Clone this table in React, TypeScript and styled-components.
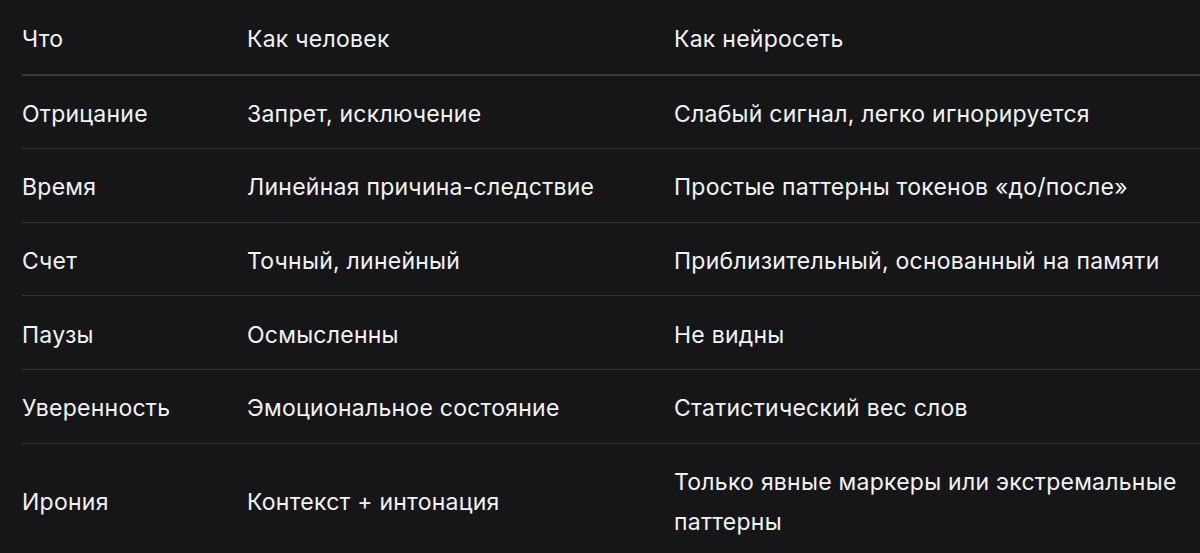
import React from "react";
import styled, { createGlobalStyle } from "styled-components";

const Global = createGlobalStyle`
  html, body { margin: 0; padding: 0; background: #161618; }
  body { font-family: Inter, "Noto Sans", sans-serif; color: #f2f2f4; }
`;

const Wrap = styled.div`
  padding: 0 0 0 22px;
  overflow: hidden;
  height: 553px;
`;

const Table = styled.table`
  border-collapse: collapse;
  width: calc(100% + 40px);
  table-layout: fixed;
  margin-top: 1px;
`;

const Cell = styled.td<{ $w?: number }>`
  box-sizing: border-box;
  width: ${(p) => (p.$w ? `${p.$w}px` : "auto")};
  padding: 18.3px 16px 14.3px 0;
  font-size: 23px;
  line-height: 40px;
  font-weight: 400;
  letter-spacing: 0.25px;
  vertical-align: middle;
  text-align: left;
`;

const Row = styled.tr<{ $head?: boolean }>`
  border-bottom: ${(p) => (p.$head ? "2px solid #3a3a3d" : "1.5px solid #333336")};
`;

const rows: [string, string, string][] = [
  ["Отрицание", "Запрет, исключение", "Слабый сигнал, легко игнорируется"],
  ["Время", "Линейная причина-следствие", "Простые паттерны токенов «до/после»"],
  ["Счет", "Точный, линейный", "Приблизительный, основанный на памяти"],
  ["Паузы", "Осмысленны", "Не видны"],
  ["Уверенность", "Эмоциональное состояние", "Статистический вес слов"],
  ["Ирония", "Контекст + интонация", "Только явные маркеры или экстремальные паттерны"],
];

export default function App() {
  return (
    <>
      <Global />
      <Wrap>
        <Table>
          <thead>
            <Row $head>
              <Cell as="th" $w={225}>Что</Cell>
              <Cell as="th" $w={427}>Как человек</Cell>
              <Cell as="th">Как нейросеть</Cell>
            </Row>
          </thead>
          <tbody>
            {rows.map((r, i) => (
              <Row key={i}>
                <Cell $w={225}>{r[0]}</Cell>
                <Cell $w={427}>{r[1]}</Cell>
                <Cell>{r[2]}</Cell>
              </Row>
            ))}
          </tbody>
        </Table>
      </Wrap>
    </>
  );
}
